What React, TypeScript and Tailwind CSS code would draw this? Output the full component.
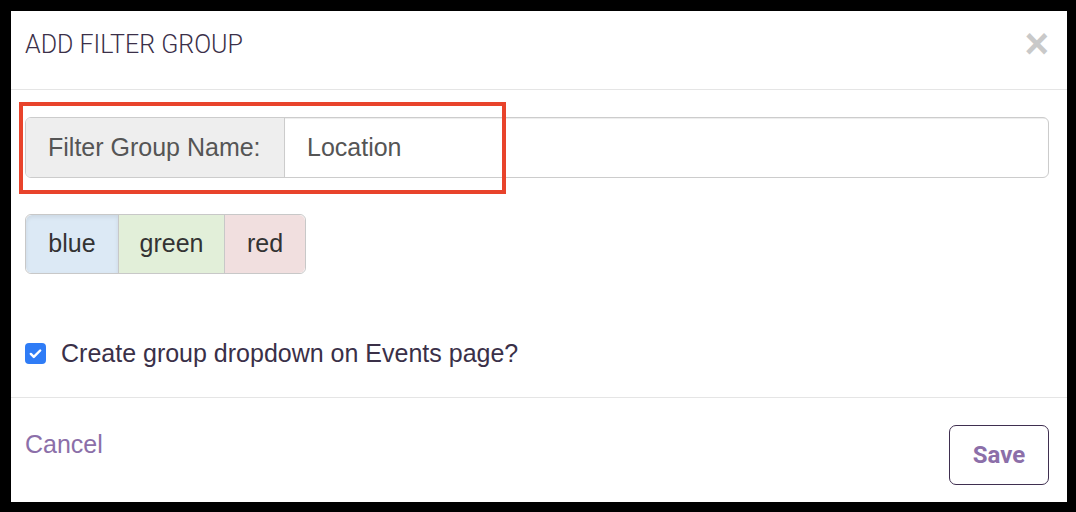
const swatches = [
  { name: 'blue', cls: 'w-[92px] bg-[#dce9f5] rounded-l-[6px] shadow-[inset_0_2px_4px_rgba(0,0,0,0.08)]' },
  { name: 'green', cls: 'w-[106px] bg-[#e2efd9] border-l border-[#c8c8c8]' },
  { name: 'red', cls: 'w-[81px] bg-[#f1dfdf] border-l border-[#c8c8c8] rounded-r-[6px]' },
];

export default function App() {
  return (
    <div className="w-[1076px] h-[512px] bg-black pt-[11px] pl-[11px] pr-[9px] pb-[10px]">
      <div className="relative flex flex-col h-full bg-white">
        {/* Header */}
        <div className="flex items-start justify-between h-[79px] border-b border-[#e5e5e5] pl-[14px] pr-[18px]">
          <h2 className="mt-[15px] text-[25px] font-light text-[#3b3049] font-[family-name:Roboto,sans-serif]">
            ADD FILTER GROUP
          </h2>
          <span className="mt-[12px] text-[42px] leading-none font-bold text-[#c9c9c9] font-[family-name:Liberation_Sans,sans-serif]">
            ×
          </span>
        </div>

        {/* Body */}
        <div className="flex flex-col flex-1 pl-[14px] pr-[18px] pt-[27px] border-b border-[#e5e5e5] font-[family-name:Liberation_Sans,Arial,sans-serif]">
          <div className="flex h-[61px] border border-[#cccccc] rounded-[6px] overflow-hidden">
            <div className="flex items-center w-[259px] px-[22px] bg-[#eeeeee] border-r border-[#cccccc] text-[25px] text-[#555555]">
              Filter Group Name:
            </div>
            <div className="flex items-center flex-1 px-[22px] text-[25px] text-[#555555] shadow-[inset_0_1px_1px_rgba(0,0,0,0.075)]">
              Location
            </div>
          </div>

          <div className="flex mt-[36px] h-[60px] w-fit border border-[#c8c8c8] rounded-[6px]">
            {swatches.map((s) => (
              <div key={s.name} className={`flex items-center justify-center text-[25px] text-[#333333] ${s.cls}`}>
                {s.name}
              </div>
            ))}
          </div>

          <label className="flex items-center mt-[61px] gap-[15px]">
            <span className="flex items-center justify-center w-[21px] h-[21px] rounded-[4px] bg-[#2f7cf6]">
              <svg width="15" height="15" viewBox="0 0 16 16" fill="none">
                <path d="M3 8.5l3.2 3.2L13 4.8" stroke="white" strokeWidth="2.6" strokeLinecap="round" strokeLinejoin="round" />
              </svg>
            </span>
            <span className="text-[25px] text-[#3a3048]">Create group dropdown on Events page?</span>
          </label>
        </div>

        {/* Footer */}
        <div className="flex items-start justify-between h-[104px] pl-[14px] pr-[18px] font-[family-name:Liberation_Sans,Arial,sans-serif]">
          <a className="mt-[28px] text-[25px] text-[#8c6fa9]">Cancel</a>
          <button className="mt-[27px] w-[100px] h-[60px] border border-[#3f2f50] rounded-[7px] text-[24px] font-bold text-[#8c6fa9] font-[family-name:Roboto,sans-serif]">
            Save
          </button>
        </div>

        {/* annotation */}
        <div className="absolute left-[8px] top-[91px] w-[487px] h-[92px] border-[4px] border-[#e8432b] pointer-events-none" />
      </div>
    </div>
  );
}
